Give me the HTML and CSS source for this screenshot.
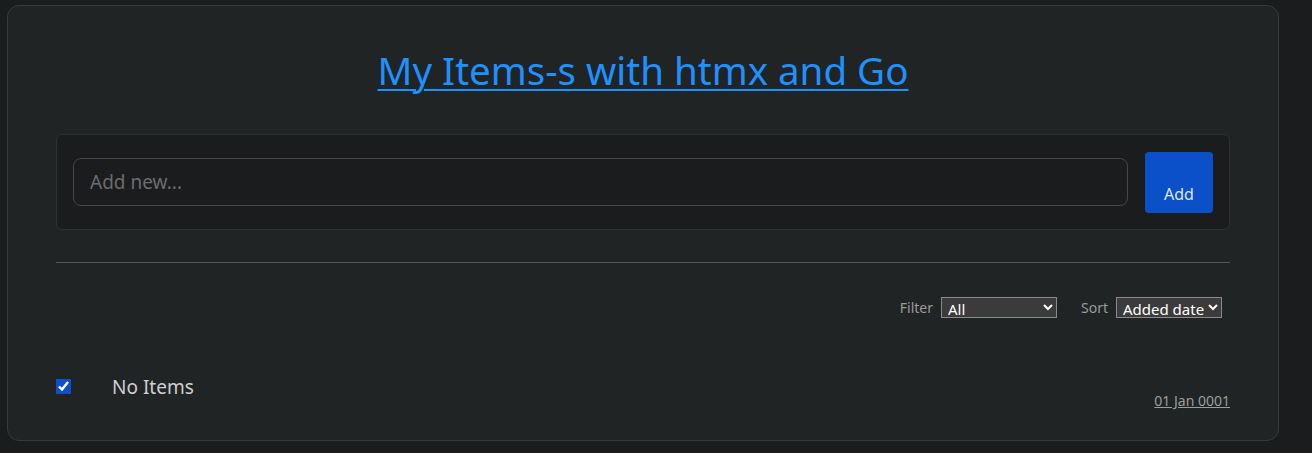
FILE: index.html
```html
<!DOCTYPE html>
<html lang="en">
<head>
<meta charset="utf-8">
<title>My Items-s with htmx and Go</title>
<link rel="stylesheet" href="styles.css">
</head>
<body>
<main class="card">
  <h1 class="title"><a href="#">My Items-s with htmx and Go</a></h1>
  <form class="add-form">
    <input class="add-input" type="text" placeholder="Add new...">
    <button class="add-btn" type="button">Add</button>
  </form>
  <hr class="divider">
  <div class="controls">
    <label class="ctl-label">Filter</label>
    <select class="ctl-select filter-select"><option>All</option></select>
    <label class="ctl-label sort-label">Sort</label>
    <select class="ctl-select sort-select"><option>Added date</option></select>
  </div>
  <div class="item">
    <input class="item-check" type="checkbox" checked>
    <span class="item-text">No Items</span>
    <a class="item-date" href="#">01 Jan 0001</a>
  </div>
</main>
</body>
</html>
```
FILE: styles.css
```css
html, body {
  margin: 0;
  padding: 0;
  background: #1b1c1e;
  font-family: "Noto Sans", "Open Sans", sans-serif;
  color: #d6d6d6;
}
body {
  padding: 5px 0 0 7px;
}
.card {
  box-sizing: border-box;
  width: 1272px;
  height: 436px;
  background: #212425;
  border: 1px solid #37393a;
  border-radius: 12px;
  padding: 39px 48px 30px 48px;
}
.title {
  margin: 0;
  text-align: center;
  font-size: 38.5px;
  font-weight: 400;
  line-height: 50px;
}
.title a {
  color: #1e90ff;
  text-decoration: underline;
  text-decoration-thickness: 2px;
  text-underline-offset: 4px;
}
.add-form {
  margin-top: 39px;
  display: flex;
  align-items: center;
  gap: 17px;
  background: #1b1c1e;
  border: 1px solid #2f3131;
  border-radius: 6px;
  padding: 16px;
  height: 96px;
  box-sizing: border-box;
}
.add-input {
  flex: 1;
  height: 48px;
  box-sizing: border-box;
  background: #1b1c1e;
  border: 1px solid #444647;
  border-radius: 8px;
  padding: 0 16px;
  font-family: inherit;
  font-size: 19px;
  color: #ddd;
  outline: none;
}
.add-input::placeholder {
  color: #6b6c6d;
}
.add-btn {
  width: 68px;
  height: 61px;
  background: #0b50c8;
  border: none;
  border-radius: 4px;
  color: #dfe7f5;
  font-family: inherit;
  font-size: 16px;
  padding: 24px 0 0 0;
}
.divider {
  margin: 32px 0 0 0;
  border: none;
  border-top: 1px solid #555758;
}
.controls {
  display: flex;
  justify-content: flex-end;
  align-items: center;
  margin-top: 34px;
  padding-right: 8px;
  font-size: 14px;
}
.ctl-label {
  color: #9a9a9a;
  margin-right: 8px;
}
.sort-label {
  margin-left: 24px;
}
.ctl-select {
  height: 21px;
  box-sizing: border-box;
  background: #3b3b3b;
  color: #fff;
  border: 1px solid #8a8a8a;
  font-family: inherit;
  font-size: 15px;
  line-height: 17px;
  padding: 0 0 2px 2px;
  border-radius: 0;
}
.filter-select { width: 116px; }
.sort-select { width: 106px; }
.item {
  display: flex;
  align-items: flex-start;
  margin-top: 60px;
}
.item-check {
  margin: 1px 0 0 0;
  width: 15px;
  height: 15px;
  accent-color: #0b50c8;
}
.item-text {
  margin-left: 41px;
  font-size: 19px;
  color: #cfcfcf;
  line-height: 18px;
}
.item-date {
  margin-left: auto;
  margin-top: 13px;
  font-size: 14px;
  color: #9c9c9c;
  text-decoration: underline;
}
```
